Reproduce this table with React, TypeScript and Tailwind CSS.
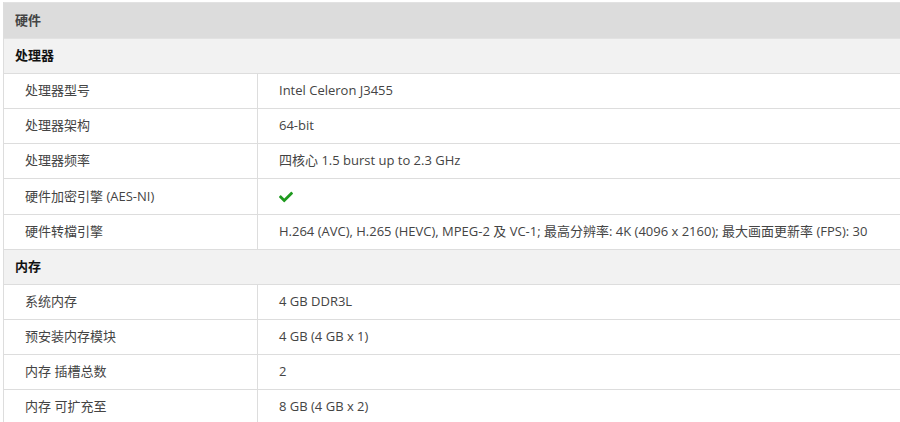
import React from "react";
import { FaCheck } from "react-icons/fa";

type Row = { label: string; value: React.ReactNode; tall?: boolean };

const cpu: Row[] = [
  { label: "处理器型号", value: "Intel Celeron J3455" },
  { label: "处理器架构", value: "64-bit" },
  { label: "处理器频率", value: "四核心 1.5 burst up to 2.3 GHz" },
  {
    label: "硬件加密引擎 (AES-NI)",
    value: <FaCheck className="text-[#1f9a1f] w-[14px] h-[14px]" />,
    tall: true,
  },
  {
    label: "硬件转檔引擎",
    value: "H.264 (AVC), H.265 (HEVC), MPEG-2 及 VC-1; 最高分辨率: 4K (4096 x 2160); 最大画面更新率 (FPS): 30",
  },
];

const mem: Row[] = [
  { label: "系统内存", value: "4 GB DDR3L" },
  { label: "预安装内存模块", value: "4 GB (4 GB x 1)" },
  { label: "内存 插槽总数", value: "2" },
  { label: "内存 可扩充至", value: "8 GB (4 GB x 2)" },
];

function DataRow({ r }: { r: Row }) {
  return (
    <div className={`flex ${r.tall ? "h-[36px]" : "h-[35px]"} border-b border-[#dddddd] bg-white`}>
      <div className="w-[254px] shrink-0 border-r border-[#dddddd] pl-[21px] flex items-center text-[#444]">
        {r.label}
      </div>
      <div className="flex-1 pl-[21px] flex items-center text-[#444] whitespace-nowrap">{r.value}</div>
    </div>
  );
}

function Group({ title }: { title: string }) {
  return (
    <div className="h-[35px] border-b border-[#dddddd] bg-[#f2f2f2] pl-[11px] flex items-center font-bold text-[#111]">
      {title}
    </div>
  );
}

export default function App() {
  return (
    <div
      className="w-[900px] h-[422px] overflow-hidden bg-white pt-[2px] pl-[3px] text-[13px]"
      style={{ fontFamily: '"Open Sans", "Noto Sans CJK SC", sans-serif' }}
    >
      <div className="w-[920px] border-l border-[#dddddd]">
        <div className="h-[37px] bg-[#dcdcdc] border-t border-b border-[#e2e2e2] pl-[11px] flex items-center font-bold text-[#444]">
          硬件
        </div>
        <Group title="处理器" />
        {cpu.map((r) => (
          <DataRow key={r.label} r={r} />
        ))}
        <Group title="内存" />
        {mem.map((r) => (
          <DataRow key={r.label} r={r} />
        ))}
      </div>
    </div>
  );
}
